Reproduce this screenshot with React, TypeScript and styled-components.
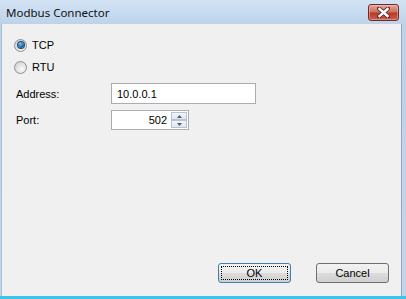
import { useState } from "react";
import styled, { createGlobalStyle } from "styled-components";

const GlobalStyle = createGlobalStyle`
  html, body {
    margin: 0;
    padding: 0;
    overflow: hidden;
    background: #ffffff;
  }
`;

const Window = styled.div`
  width: 406px;
  height: 299px;
  display: flex;
  flex-direction: column;
  box-sizing: border-box;
  background: linear-gradient(#d3e3f4, #bdd3ea 24px, #c2d6eb);
  border-bottom: 3px solid #3cc5e8;
`;

const TitleBar = styled.div`
  height: 24px;
  flex: 0 0 24px;
  display: flex;
  align-items: center;
  justify-content: space-between;
  padding: 0 7px 0 6px;
  box-sizing: border-box;
`;

const Title = styled.span`
  font-family: "Noto Sans", "Open Sans", sans-serif;
  font-size: 11.5px;
  color: #111;
  margin-top: 1px;
`;

const CloseButton = styled.button`
  width: 31px;
  height: 17px;
  margin-top: 1px;
  padding: 0;
  border: 1px solid #6e2b2b;
  border-radius: 3px;
  display: flex;
  align-items: center;
  justify-content: center;
  background: linear-gradient(#e3a89c, #d0705f 45%, #b8392a 55%, #c9604c);
  box-shadow: inset 0 0 0 1px rgba(255, 200, 190, 0.45);
`;

const Client = styled.div`
  flex: 1;
  margin: 0 4px 0 1px;
  background: #f0f0f0;
  border-left: 1px solid #a9bfd6;
  border-right: 1px solid #8fa7c0;
  display: flex;
  flex-direction: column;
  padding: 10px 12px 13px 12px;
  font-family: "Liberation Sans", Arial, sans-serif;
  font-size: 11px;
  color: #000;
`;

const RadioRow = styled.label`
  height: 22px;
  display: flex;
  align-items: center;
  gap: 5px;
  cursor: default;
`;

const RadioCircle = styled.span<{ checked: boolean }>`
  width: 13px;
  height: 13px;
  box-sizing: border-box;
  border-radius: 50%;
  border: 1px solid #8e9092;
  background: radial-gradient(circle at 60% 65%, #fafafa, #d8d8d8 70%);
  display: flex;
  align-items: center;
  justify-content: center;
  &::after {
    content: "";
    display: ${(p) => (p.checked ? "block" : "none")};
    width: 6px;
    height: 6px;
    border-radius: 50%;
    background: radial-gradient(circle at 40% 35%, #7cc8f2, #1f74b0 50%, #0f3d63);
    box-shadow: 0 0 0 1px #28445f;
  }
`;

const FormRow = styled.div<{ top: number; h: number }>`
  display: grid;
  grid-template-columns: 95px auto;
  align-items: center;
  margin: ${(p) => p.top}px 0 0 2px;
  height: ${(p) => p.h}px;
`;

const TextBox = styled.div<{ w: number; right?: boolean }>`
  width: ${(p) => p.w}px;
  height: 100%;
  box-sizing: border-box;
  background: #fff;
  border: 1px solid #abadb3;
  display: flex;
  align-items: center;
  justify-content: ${(p) => (p.right ? "flex-end" : "flex-start")};
  padding: ${(p) => (p.right ? "0 1px 0 4px" : "0 5px")};
`;

const Spinner = styled.div`
  display: flex;
  flex-direction: column;
  width: 16px;
  height: 16px;
  margin-left: 4px;
`;

const SpinHalf = styled.div`
  flex: 1;
  box-sizing: border-box;
  border: 1px solid #b7c3d3;
  background: linear-gradient(#f4f6f9, #dde4ee);
  display: flex;
  align-items: center;
  justify-content: center;
`;

const ButtonRow = styled.div`
  margin-top: auto;
  display: flex;
  justify-content: flex-end;
  gap: 25px;
`;

const DialogButton = styled.button<{ primary?: boolean }>`
  width: 73px;
  height: 20px;
  box-sizing: border-box;
  padding: 0;
  border-radius: 3px;
  border: 1px solid ${(p) => (p.primary ? "#3c7fb1" : "#707070")};
  background: linear-gradient(#f2f2f2, #ebebeb 50%, #dddddd 50%, #cfcfcf);
  font-family: "Liberation Sans", Arial, sans-serif;
  font-size: 11px;
  color: #000;
  position: relative;
  &::after {
    content: "";
    display: ${(p) => (p.primary ? "block" : "none")};
    position: absolute;
    inset: 2px;
    border: 1px dotted #000;
  }
`;

function App() {
  const [mode, setMode] = useState("TCP");

  return (
    <Window>
      <GlobalStyle />
      <TitleBar>
        <Title>Modbus Connector</Title>
        <CloseButton>
          <svg width="13" height="11" viewBox="0 0 13 11">
            <path
              d="M2 1.5 L11 9.5 M11 1.5 L2 9.5"
              stroke="#5a3030"
              strokeWidth="4.2"
              strokeLinecap="square"
            />
            <path
              d="M2.5 2 L10.5 9 M10.5 2 L2.5 9"
              stroke="#ffffff"
              strokeWidth="2.4"
              strokeLinecap="square"
            />
          </svg>
        </CloseButton>
      </TitleBar>
      <Client>
        {["TCP", "RTU"].map((m) => (
          <RadioRow key={m} onClick={() => setMode(m)}>
            <RadioCircle checked={mode === m} />
            {m}
          </RadioRow>
        ))}
        <FormRow top={5} h={21}>
          <span>Address:</span>
          <TextBox w={145}>10.0.0.1</TextBox>
        </FormRow>
        <FormRow top={6} h={20}>
          <span>Port:</span>
          <TextBox w={78} right>
            502
            <Spinner>
              <SpinHalf>
                <svg width="5" height="3" viewBox="0 0 5 3">
                  <path d="M0 3 L2.5 0 L5 3 Z" fill="#4d5d78" />
                </svg>
              </SpinHalf>
              <SpinHalf>
                <svg width="5" height="3" viewBox="0 0 5 3">
                  <path d="M0 0 L2.5 3 L5 0 Z" fill="#4d5d78" />
                </svg>
              </SpinHalf>
            </Spinner>
          </TextBox>
        </FormRow>
        <ButtonRow>
          <DialogButton primary>OK</DialogButton>
          <DialogButton>Cancel</DialogButton>
        </ButtonRow>
      </Client>
    </Window>
  );
}

export default App;
